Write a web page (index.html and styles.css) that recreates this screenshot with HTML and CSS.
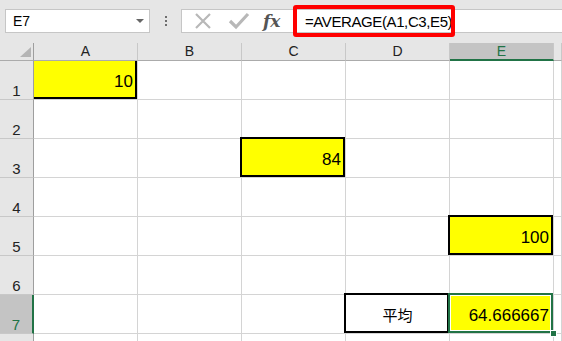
FILE: index.html
```html
<!DOCTYPE html>
<html lang="ja">
<head>
  <meta charset="UTF-8" />
  <title>AVERAGE</title>
  <link rel="stylesheet" href="styles.css">
</head>
<body>
  <div class="toolbar">
    <div class="namebox">
      <span>E7</span>
      <span class="arrow"></span>
    </div>
    <div class="dots"><i></i><i></i><i></i></div>
    <div class="formula">
      <div class="fbtns">
        <svg class="btn" width="20" height="20" viewBox="0 0 20 20"><path d="M3 3 L17 17 M17 3 L3 17" stroke="#b8b8b8" stroke-width="2.2" fill="none"/></svg>
        <svg class="btn" width="22" height="20" viewBox="0 0 22 20"><path d="M2 10 L8 16 L20 3" stroke="#b8b8b8" stroke-width="3.2" fill="none"/></svg>
        <span class="fx">fx</span>
      </div>
      <div class="finput">
        <span class="ftext">=AVERAGE(A1,C3,E5)</span>
        <span class="mark"></span>
      </div>
    </div>
  </div>

  <div class="sheet">
    <!-- 見出し行 -->
    <div class="corner"><span class="tri"></span></div>
    <div class="colh">A</div>
    <div class="colh">B</div>
    <div class="colh">C</div>
    <div class="colh">D</div>
    <div class="colh sel">E</div>
    <div class="colh"></div>

    <div class="rowh">1</div>
    <div class="cell yellow edge-rb">10</div>
    <div class="cell"></div><div class="cell"></div><div class="cell"></div><div class="cell"></div><div class="cell"></div>

    <div class="rowh">2</div>
    <div class="cell"></div><div class="cell"></div><div class="cell"></div><div class="cell"></div><div class="cell"></div><div class="cell"></div>

    <div class="rowh">3</div>
    <div class="cell"></div><div class="cell"></div>
    <div class="cell yellow boxed">84</div>
    <div class="cell"></div><div class="cell"></div><div class="cell"></div>

    <div class="rowh">4</div>
    <div class="cell"></div><div class="cell"></div><div class="cell"></div><div class="cell"></div><div class="cell"></div><div class="cell"></div>

    <div class="rowh">5</div>
    <div class="cell"></div><div class="cell"></div><div class="cell"></div><div class="cell"></div>
    <div class="cell yellow boxed">100</div>
    <div class="cell"></div>

    <div class="rowh">6</div>
    <div class="cell"></div><div class="cell"></div><div class="cell"></div><div class="cell"></div><div class="cell"></div><div class="cell"></div>

    <div class="rowh sel">7</div>
    <div class="cell"></div><div class="cell"></div><div class="cell"></div>
    <div class="cell boxed center">平均</div>
    <div class="cell yellow active">64.666667</div>
    <div class="cell"></div>

    <div class="rowh"></div>
    <div class="cell"></div><div class="cell"></div><div class="cell"></div><div class="cell"></div><div class="cell"></div><div class="cell"></div>
  </div>
</body>
</html>
```

FILE: styles.css
```css
body {
  margin: 0;
  width: 562px;
  height: 341px;
  overflow: hidden;
  background: #fff;
  color: #000;
  font-family: "Liberation Sans", "Noto Sans CJK JP", sans-serif;
}

/* 数式バー */
.toolbar {
  height: 43px;
  background: #e6e6e6;
  display: flex;
  align-items: flex-start;
  padding-top: 9px;
  box-sizing: border-box;
}
.namebox {
  margin-left: 5px;
  width: 145px;
  height: 24px;
  box-sizing: border-box;
  border: 1px solid #c6c6c6;
  background: #fff;
  display: flex;
  align-items: center;
  justify-content: space-between;
  padding: 0 5px 0 7px;
  font-size: 14px;
}
.arrow {
  width: 0;
  height: 0;
  border-left: 4px solid transparent;
  border-right: 4px solid transparent;
  border-top: 4px solid #666;
}
.dots {
  width: 31px;
  height: 24px;
  display: flex;
  flex-direction: column;
  align-items: center;
  justify-content: center;
  gap: 2px;
}
.dots i {
  width: 2px;
  height: 2px;
  background: #6e6e6e;
}
.formula {
  flex: 1;
  height: 24px;
  box-sizing: border-box;
  border: 1px solid #c6c6c6;
  border-right: none;
  background: #fff;
  display: flex;
}
.fbtns {
  width: 111px;
  display: flex;
  align-items: center;
  gap: 15px;
  padding-left: 11px;
  box-sizing: border-box;
}
.fx {
  font-family: "DejaVu Serif", "Liberation Serif", serif;
  font-style: italic;
  font-weight: bold;
  font-size: 17px;
  color: #555;
  margin-left: -2px;
}
.finput {
  flex: 1;
  position: relative;
  display: flex;
  align-items: center;
  padding-left: 12px;
}
.ftext {
  font-size: 15px;
  letter-spacing: -0.4px;
}
/* 赤枠の注釈 */
.mark {
  position: absolute;
  left: 0;
  top: -5px;
  width: 162px;
  height: 32px;
  box-sizing: border-box;
  border: 4px solid #ff0000;
  border-radius: 3px;
}

/* シート */
.sheet {
  display: grid;
  grid-template-columns: 34px repeat(5, 104px) 1fr;
  grid-template-rows: 18px repeat(7, 39px) 1fr;
  height: 298px;
}
.corner,
.colh,
.rowh {
  background: #e6e6e6;
  box-sizing: border-box;
  color: #222;
}
.corner {
  border-right: 1px solid #9e9e9e;
  border-bottom: 1px solid #ababab;
  position: relative;
}
.tri {
  position: absolute;
  right: 2px;
  bottom: 3px;
  width: 0;
  height: 0;
  border-left: 11px solid transparent;
  border-bottom: 10px solid #b4b4b4;
}
.colh {
  border-right: 1px solid #c8c8c8;
  border-bottom: 1px solid #ababab;
  font-size: 14px;
  line-height: 17px;
  text-align: center;
}
.colh.sel {
  background: #c4c4c4;
  color: #217346;
  border-bottom: 2px solid #217346;
}
.rowh {
  border-right: 1px solid #9e9e9e;
  border-bottom: 1px solid #c8c8c8;
  font-size: 15px;
  line-height: 17px;
  display: flex;
  align-items: flex-end;
  justify-content: center;
}
.rowh.sel {
  background: #c4c4c4;
  color: #217346;
  border-right: 2px solid #217346;
}
.cell {
  box-sizing: border-box;
  border-right: 1px solid #d4d4d4;
  border-bottom: 1px solid #d4d4d4;
  font-size: 17px;
  line-height: 20px;
  display: flex;
  align-items: flex-end;
  justify-content: flex-end;
  padding: 0 4px 7px 0;
  position: relative;
}
.cell.center {
  justify-content: center;
  font-size: 15px;
  padding-right: 0;
}
.yellow {
  background: #ffff00;
}
.edge-rb::after,
.boxed::after,
.active::after {
  content: "";
  position: absolute;
  top: -2px;
  left: -2px;
  right: 0;
  bottom: 0;
  border: 2px solid #000;
}
.edge-rb::after {
  top: 0;
  left: 0;
  border-top: none;
  border-left: none;
}
.active::after {
  border-color: #217346;
  box-shadow: inset 0 0 0 1px #fff;
}
.active::before {
  content: "";
  position: absolute;
  right: -4px;
  bottom: -4px;
  width: 5px;
  height: 5px;
  background: #217346;
  border: 1px solid #fff;
  z-index: 1;
}
```
